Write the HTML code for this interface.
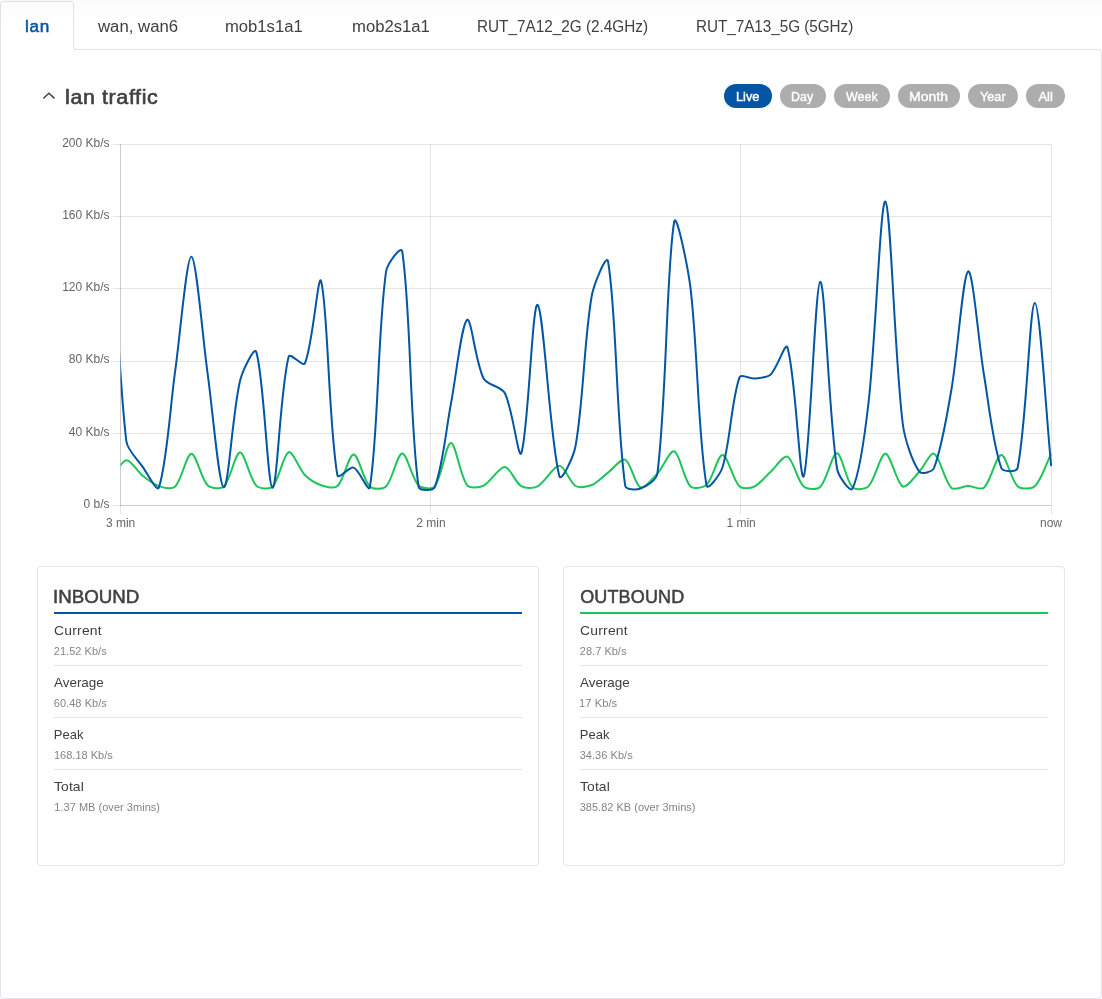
<!DOCTYPE html>
<html lang="en">
<head>
<meta charset="utf-8">
<title>Realtime traffic - lan</title>
<style>
html,body{margin:0;padding:0}
body{width:1102px;height:999px;background:#fff;position:relative;overflow:hidden;font-family:"Liberation Sans",sans-serif;color:#3f3f3f}
main{position:absolute;left:0;top:0;width:1102px;height:999px;will-change:transform}
.top{position:absolute;z-index:5;pointer-events:none;left:0;top:0;width:1102px;height:18px;background:linear-gradient(to bottom,rgba(0,0,0,.022) 0,rgba(0,0,0,.022) 1px,rgba(0,0,0,.011) 1px,rgba(0,0,0,.011) 9px,rgba(0,0,0,.005) 9px,rgba(0,0,0,.005) 18px)}
.panel{position:absolute;left:0;top:49px;width:1100px;height:948px;border:1px solid #e3e4e8;border-radius:0 4px 4px 4px;background:#fff}
.tabs{position:absolute;left:0;top:0;width:1102px;height:50px}
.tab-on{position:absolute;left:0;top:1px;width:72px;height:45px;border:1px solid #e3e4e8;border-bottom:0;border-radius:4px 4px 0 0;background:#fff}
.tab-cover{position:absolute;left:0;top:46px;width:73px;height:6px;border-left:1px solid #e3e4e8;background:#fff}
.tab-rest{position:absolute;left:73px;top:40px;width:30px;height:9px;border-left:1px solid #e3e4e8;border-bottom:1px solid #e3e4e8;border-bottom-left-radius:4px;background:#fff}
.t{position:absolute;display:block;transform-origin:0 0;white-space:nowrap;line-height:1;margin:0;padding:0;font-weight:400;text-decoration:none}
.tab{font-size:16px;color:#404040}
.tab.on{color:#0455a4;-webkit-text-stroke:.5px #0455a4}
.h2{font-size:20px;color:#404040;-webkit-text-stroke:.6px #404040}
.chev{position:absolute;left:40px;top:88px}
.pill{position:absolute;top:84px;height:24px;border:0;margin:0;padding:0;border-radius:12px;background:#adadad;font-family:inherit}
.pill.on{background:#0455a4}
.pt{font-size:13px;color:#fff;-webkit-text-stroke:.4px #fff}
.chart{position:absolute;left:0;top:130px}
.chart text{font-family:"Liberation Sans",sans-serif;font-size:12px;fill:#666}
.card{position:absolute;top:566px;width:500px;height:298px;border:1px solid #e6e6e6;border-radius:4px;background:#fff}
.card dl{margin:0;padding:0}
.rule{position:absolute;left:16px;top:45px;height:2px;width:468px}
.sep{position:absolute;left:16px;height:1px;width:468px;background:#e5e5e5}
.ct{font-size:18px;color:#404040;-webkit-text-stroke:.5px #404040}
.lb{font-size:13px;color:#3f3f3f}
.vl{font-size:11px;color:#858585}
</style>
</head>
<body>
<main>
<div class="top"></div>
<section class="panel"></section>
<div class="tab-on"></div><div class="tab-cover"></div><div class="tab-rest"></div>
<nav class="tabs">
<a class="t tab on" id="tab0" style="left:24.61px;top:19px;letter-spacing:0.69px;transform:scaleX(1.07)">lan</a>
<a class="t tab" id="tab1" style="left:97.75px;top:19px;transform:scaleX(1.048)">wan, wan6</a>
<a class="t tab" id="tab2" style="left:224.82px;top:19px;transform:scaleX(1.039)">mob1s1a1</a>
<a class="t tab" id="tab3" style="left:351.82px;top:19px;transform:scaleX(1.042)">mob2s1a1</a>
<a class="t tab" id="tab4" style="left:477.46px;top:19px;transform:scaleX(0.957)">RUT_7A12_2G (2.4GHz)</a>
<a class="t tab" id="tab5" style="left:695.73px;top:19px;letter-spacing:-0.01px;transform:scaleX(0.952)">RUT_7A13_5G (5GHz)</a>
</nav>
<svg class="chev" width="18" height="16" viewBox="40 88 18 16" aria-hidden="true"><path d="M43.8 97.9L48.9 93.3L54.0 97.9" fill="none" stroke="#404040" stroke-width="1.4" stroke-linecap="square"/></svg>
<h2 class="t h2" id="h2" style="left:65.2px;top:87px;letter-spacing:0.59px;transform:scaleX(1.07)">lan traffic</h2>
<button type="button" class="pill on" style="left:724px;width:48px"><span class="t pt" id="pill0" style="left:12.1px;top:6px;transform:scaleX(0.978)">Live</span></button>
<button type="button" class="pill" style="left:780px;width:46px"><span class="t pt" id="pill1" style="left:11.3px;top:6px;letter-spacing:0.15px;transform:scaleX(0.953)">Day</span></button>
<button type="button" class="pill" style="left:834px;width:56px"><span class="t pt" id="pill2" style="left:12.07px;top:6px;transform:scaleX(0.96)">Week</span></button>
<button type="button" class="pill" style="left:898px;width:62px"><span class="t pt" id="pill3" style="left:10.92px;top:6px;letter-spacing:0.1px;transform:scaleX(1.07)">Month</span></button>
<button type="button" class="pill" style="left:968px;width:50px"><span class="t pt" id="pill4" style="left:12.04px;top:6px;transform:scaleX(0.975)">Year</span></button>
<button type="button" class="pill" style="left:1026px;width:39px"><span class="t pt" id="pill5" style="left:12.42px;top:6px">All</span></button>
<svg class="chart" width="1102" height="410" viewBox="0 130 1102 410" role="img" aria-label="lan traffic chart">
<g shape-rendering="crispEdges" fill="rgba(0,0,0,.1)"><rect x="113" y="144" width="938" height="1"/><rect x="113" y="216" width="938" height="1"/><rect x="113" y="288" width="938" height="1"/><rect x="113" y="361" width="938" height="1"/><rect x="113" y="433" width="938" height="1"/><rect x="113" y="505" width="938" height="1"/><rect x="120" y="144" width="1" height="369.5"/><rect x="430" y="144" width="1" height="369.5"/><rect x="740" y="144" width="1" height="369.5"/><rect x="1051" y="144" width="1" height="369.5"/><rect x="120" y="144" width="1" height="362"/><rect x="120" y="505" width="931" height="1"/></g>
<g text-anchor="end">
<text x="109.5" y="146.7">200 Kb/s</text>
<text x="109.5" y="218.9">160 Kb/s</text>
<text x="109.5" y="291.1">120 Kb/s</text>
<text x="109.5" y="363.3">80 Kb/s</text>
<text x="109.5" y="435.5">40 Kb/s</text>
<text x="109.5" y="507.7">0 b/s</text>
</g><g text-anchor="middle">
<text x="120.6" y="527">3 min</text>
<text x="430.9" y="527">2 min</text>
<text x="741.1" y="527">1 min</text>
<text x="1051.0" y="527">now</text>
</g>
<defs><clipPath id="ca"><rect x="120.5" y="143.5" width="932" height="363"/></clipPath></defs>
<g clip-path="url(#ca)" fill="none" stroke-width="2" stroke-linejoin="round" stroke-linecap="butt">
<path stroke="#1ec558" d="M110.3 480.0C115.1 474.1 121.2 460.9 126.3 460.2C130.9 459.6 137.4 471.6 142.7 475.8C147.2 479.4 153.6 484.4 158.9 486.1C163.4 487.6 172.2 489.5 175.2 486.5C181.9 479.8 186.5 453.9 191.4 453.7C196.2 453.5 200.9 478.5 207.6 485.3C210.7 488.4 220.9 489.5 223.8 486.5C230.6 479.7 235.1 452.7 240.0 452.6C244.8 452.5 249.5 478.5 256.3 485.6C259.3 488.7 269.6 489.8 272.5 486.8C279.3 479.8 283.1 454.2 288.7 452.2C292.8 450.7 299.1 469.1 304.9 475.0C308.8 479.0 315.8 483.4 321.1 485.2C325.6 486.7 334.3 489.0 337.4 486.1C344.1 479.8 348.8 454.3 353.6 454.4C358.5 454.5 363.1 479.9 369.8 486.5C372.8 489.5 383.0 489.5 386.0 486.5C392.7 479.6 397.2 453.7 402.2 453.5C407.0 453.3 411.8 478.4 418.5 485.2C421.6 488.3 432.2 489.8 434.7 486.5C441.9 477.1 446.0 443.2 450.9 443.0C455.7 442.8 459.9 475.8 467.1 485.2C469.7 488.6 479.4 487.6 483.6 485.6C490.7 482.2 498.8 466.9 504.8 467.0C510.1 467.1 515.3 482.7 521.3 486.2C525.2 488.5 533.6 488.5 537.6 486.3C545.0 482.3 553.3 465.7 559.4 465.7C564.7 465.7 569.6 482.4 575.6 486.0C579.3 488.2 587.4 486.8 591.7 485.0C597.1 482.8 603.1 476.3 608.0 472.6C613.2 468.7 621.3 457.8 625.2 459.6C631.0 462.2 634.8 484.9 640.5 487.4C644.4 489.1 653.0 478.3 657.4 473.5C663.1 467.4 670.1 449.7 674.2 451.3C680.0 453.6 683.6 479.5 690.5 486.5C693.4 489.4 703.5 487.7 706.6 484.6C713.1 478.2 717.8 454.7 722.6 455.0C727.7 455.3 732.8 479.8 739.6 486.5C742.4 489.3 750.7 488.3 754.5 486.5C760.1 483.9 765.8 476.1 770.7 471.7C775.7 467.2 783.5 454.8 787.4 456.6C793.4 459.3 797.1 480.4 803.7 486.5C806.9 489.5 817.2 490.0 820.2 487.0C827.1 480.1 832.1 453.2 837.0 453.3C841.8 453.4 845.9 480.5 852.5 487.4C855.4 490.4 865.6 489.2 868.6 486.1C875.4 479.1 880.3 453.6 885.4 453.7C890.6 453.8 896.4 483.1 902.8 486.5C906.6 488.5 914.7 476.5 919.3 471.7C924.1 466.7 930.4 451.9 934.0 453.7C940.0 456.7 944.4 481.2 951.5 488.0C954.6 491.0 963.2 486.1 968.2 486.1C972.9 486.1 981.0 490.6 984.0 487.8C991.0 481.3 996.1 455.2 1001.3 455.0C1006.2 454.8 1010.8 479.9 1017.6 486.2C1020.9 489.3 1031.6 489.4 1034.8 486.3C1041.7 479.6 1046.3 463.4 1051.2 453.6"/>
<path stroke="#0455a4" d="M110.3 186.0C115.1 262.5 117.6 365.8 126.3 441.0C127.3 450.0 137.4 459.3 142.7 466.8C147.2 473.2 157.1 492.8 158.9 487.5C166.9 463.9 170.3 405.7 175.2 370.7C180.0 336.5 186.6 256.3 191.4 256.7C196.3 257.1 202.7 338.3 207.6 373.3C212.4 407.5 218.8 486.2 223.8 487.4C228.5 488.5 232.6 412.0 240.0 380.9C242.3 371.3 254.4 345.6 256.3 351.9C264.1 377.7 267.6 487.1 272.5 487.8C277.3 488.5 280.1 389.5 288.7 356.5C289.8 352.1 303.2 367.2 304.9 363.3C312.9 344.6 318.2 271.1 321.1 281.2C327.9 304.7 328.5 424.2 337.4 475.4C338.2 480.1 349.6 466.1 353.6 467.6C359.3 469.7 368.8 493.6 369.8 487.4C378.5 434.9 377.3 335.0 386.0 271.8C387.1 264.1 401.2 244.8 402.2 251.2C411.0 309.2 409.4 420.3 418.5 486.5C419.1 491.1 433.1 491.2 434.7 487.2C442.9 466.4 446.1 429.0 450.9 404.0C455.8 378.7 461.4 324.3 467.1 319.8C471.2 316.6 475.6 363.0 483.6 378.5C487.0 385.0 501.5 386.5 504.8 393.0C512.8 408.8 518.4 460.9 521.3 453.1C528.2 434.4 532.3 301.6 537.6 304.8C543.7 308.5 549.9 441.0 559.4 476.2C561.3 483.2 573.8 455.8 575.6 445.7C583.5 401.7 584.0 340.1 591.7 296.0C593.7 284.8 606.5 253.0 608.0 261.3C616.6 309.9 616.1 421.9 625.2 485.6C625.8 490.0 636.6 490.0 640.5 488.5C646.2 486.4 656.6 480.1 657.4 473.5C666.7 400.1 666.4 265.6 674.2 221.8C676.3 210.0 688.0 267.8 690.5 288.1C697.7 347.0 698.0 437.8 706.6 485.6C707.7 491.5 720.5 473.9 722.6 467.0C730.4 441.4 731.4 400.0 739.6 377.2C740.9 373.5 750.1 378.9 754.5 378.5C759.4 378.1 767.3 377.6 770.7 374.4C777.2 368.3 785.5 341.4 787.4 347.4C795.4 372.0 799.8 484.2 803.7 476.3C809.6 464.5 815.1 282.9 820.2 281.7C825.1 280.6 828.5 413.8 837.0 468.5C838.2 475.9 850.4 493.2 852.5 488.7C859.9 473.2 865.6 428.3 868.6 402.0C875.5 342.1 880.5 198.4 885.4 201.5C890.8 205.0 894.5 357.9 902.8 424.0C904.7 439.0 912.1 461.5 919.3 471.7C921.5 474.7 932.5 471.9 934.0 468.0C942.1 447.1 947.3 412.9 951.5 389.0C957.6 353.9 963.0 273.6 968.2 271.4C972.8 269.4 978.8 344.0 984.0 375.0C988.7 403.0 992.7 444.2 1001.3 468.0C1002.8 472.1 1016.7 472.4 1017.6 468.0C1026.8 422.9 1029.7 303.3 1034.8 303.0C1039.8 302.7 1046.3 417.2 1051.2 466.2"/>
</g>
</svg>
<article class="card" style="left:37px">
<h3 class="t ct" id="ct0" style="left:15.29px;top:21px;transform:scaleX(1.04)">INBOUND</h3>
<div class="rule" style="background:#0455a4"></div>
<dl>
<dt class="t lb" id="lb0_0" style="left:15.75px;top:57px;letter-spacing:0.2px;transform:scaleX(1.07)">Current</dt>
<dd class="t vl" id="vl0_0" style="left:15.82px;top:79px;letter-spacing:0.03px">21.52 Kb/s</dd>
<dt class="t lb" id="lb0_1" style="left:16.2px;top:109px;transform:scaleX(1.033)">Average</dt>
<dd class="t vl" id="vl0_1" style="left:15.77px;top:131px;letter-spacing:0.05px">60.48 Kb/s</dd>
<dt class="t lb" id="lb0_2" style="left:15.86px;top:161px">Peak</dt>
<dd class="t vl" id="vl0_2" style="left:15.98px;top:183px;letter-spacing:0.01px">168.18 Kb/s</dd>
<dt class="t lb" id="lb0_3" style="left:16.05px;top:213px;letter-spacing:0.09px;transform:scaleX(1.07)">Total</dt>
<dd class="t vl" id="vl0_3" style="left:16.28px;top:235px;letter-spacing:0.03px">1.37 MB (over 3mins)</dd>
</dl>
<div class="sep" style="top:98px"></div>
<div class="sep" style="top:150px"></div>
<div class="sep" style="top:202px"></div>
</article>
<article class="card" style="left:563px">
<h3 class="t ct" id="ct1" style="left:16.18px;top:21px;letter-spacing:0.15px">OUTBOUND</h3>
<div class="rule" style="background:#1ec558"></div>
<dl>
<dt class="t lb" id="lb1_0" style="left:15.75px;top:57px;letter-spacing:0.2px;transform:scaleX(1.07)">Current</dt>
<dd class="t vl" id="vl1_0" style="left:15.82px;top:79px;letter-spacing:0.02px">28.7 Kb/s</dd>
<dt class="t lb" id="lb1_1" style="left:16.2px;top:109px;transform:scaleX(1.033)">Average</dt>
<dd class="t vl" id="vl1_1" style="left:15.26px;top:131px;letter-spacing:0.04px;transform:scaleX(1.017)">17 Kb/s</dd>
<dt class="t lb" id="lb1_2" style="left:15.86px;top:161px">Peak</dt>
<dd class="t vl" id="vl1_2" style="left:15.71px;top:183px;letter-spacing:0.04px">34.36 Kb/s</dd>
<dt class="t lb" id="lb1_3" style="left:16.05px;top:213px;letter-spacing:0.09px;transform:scaleX(1.07)">Total</dt>
<dd class="t vl" id="vl1_3" style="left:15.71px;top:235px;letter-spacing:0.01px">385.82 KB (over 3mins)</dd>
</dl>
<div class="sep" style="top:98px"></div>
<div class="sep" style="top:150px"></div>
<div class="sep" style="top:202px"></div>
</article>
</main>
</body>
</html>
